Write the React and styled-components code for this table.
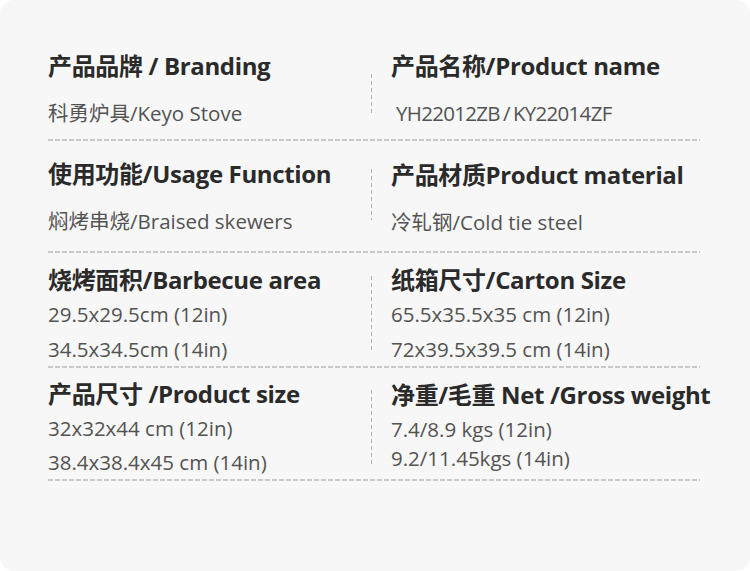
import React from "react"
import styled, { createGlobalStyle } from "styled-components"

const GlobalStyle = createGlobalStyle`
  html, body {
    margin: 0;
    padding: 0;
    background: #ffffff;
  }
  body {
    font-family: "Open Sans", "Noto Sans CJK SC", sans-serif;
  }
`

const rows = [
  {
    pad: [16, 11],
    divider: [25, 16],
    left: {
      title: "产品品牌 / Branding",
      values: ["科勇炉具/Keyo Stove"],
      gap: 13,
      lh: 34,
    },
    right: {
      title: "产品名称/Product name",
      values: ["YH22012ZB / KY22014ZF"],
      gap: 13,
      lh: 34,
      indent: 5,
      tight: true,
    },
  },
  {
    pad: [16, 14],
    divider: [12, 19],
    left: {
      title: "使用功能/Usage Function",
      values: ["焖烤串烧/Braised skewers"],
      gap: 13,
      lh: 34,
    },
    right: {
      title: "产品材质Product material",
      values: ["冷轧钢/Cold tie steel"],
      gap: 13,
      lh: 34,
      top: 1,
    },
  },
  {
    pad: [10, 1],
    divider: [13, 14],
    left: {
      title: "烧烤面积/Barbecue area",
      values: ["29.5x29.5cm (12in)", "34.5x34.5cm (14in)"],
      gap: 0,
      lh: 35,
    },
    right: {
      title: "纸箱尺寸/Carton Size",
      values: ["65.5x35.5x35 cm (12in)", "72x39.5x39.5 cm (14in)"],
      gap: 0,
      lh: 35,
    },
  },
  {
    pad: [9, 2],
    divider: [13, 12],
    left: {
      title: "产品尺寸 /Product size",
      values: ["32x32x44 cm (12in)", "38.4x38.4x45 cm (14in)"],
      gap: 0,
      lh: 34,
    },
    right: {
      title: "净重/毛重 Net /Gross weight",
      values: ["7.4/8.9 kgs (12in)", "9.2/11.45kgs (14in)"],
      gap: 3,
      lh: 29,
      top: 1,
    },
  },
]

const Cell = ({ data }) => (
  <CellBox $top={data.top || 0}>
    <Title>{data.title}</Title>
    <Values $gap={data.gap}>
      {data.values.map((v) => (
        <Value
          key={v}
          $lh={data.lh}
          $indent={data.indent || 0}
          $tight={data.tight}
        >
          {v}
        </Value>
      ))}
    </Values>
  </CellBox>
)

const App = () => {
  return (
    <>
      <GlobalStyle />
      <Card>
        <Table>
          {rows.map((row, i) => (
            <Row key={i} $pt={row.pad[0]} $pb={row.pad[1]}>
              <LeftCol>
                <Cell data={row.left} />
              </LeftCol>
              <Divider $mt={row.divider[0]} $mb={row.divider[1]} />
              <RightCol>
                <Cell data={row.right} />
              </RightCol>
            </Row>
          ))}
        </Table>
      </Card>
    </>
  )
}

export default App

const Card = styled.div`
  height: 571px;
  box-sizing: border-box;
  background: #f7f7f7;
  border-radius: 14px;
  padding: 33px 50px 0 48px;
  overflow: hidden;
`

const Table = styled.div`
  display: flex;
  flex-direction: column;
`

const Row = styled.div`
  display: flex;
  align-items: stretch;
  background: repeating-linear-gradient(
      to right,
      #c9c9c9 0 5px,
      transparent 5px 7px
    )
    left bottom / 100% 2px no-repeat;
  padding-top: ${(p) => p.$pt}px;
  padding-bottom: ${(p) => p.$pb}px;
`

const LeftCol = styled.div`
  flex: 0 0 323px;
  display: flex;
`

const RightCol = styled.div`
  flex: 1;
  display: flex;
  padding-left: 19px;
`

const Divider = styled.div`
  flex: 0 0 1px;
  margin-top: ${(p) => p.$mt}px;
  margin-bottom: ${(p) => p.$mb}px;
  background: repeating-linear-gradient(
    to bottom,
    #b3b3b3 0 4px,
    transparent 4px 7px
  );
`

const CellBox = styled.div`
  display: flex;
  flex-direction: column;
  padding-top: ${(p) => p.$top}px;
`

const Title = styled.div`
  font-family: "Open Sans", "Noto Sans CJK SC", sans-serif;
  font-size: 24px;
  font-weight: 700;
  line-height: 34px;
  letter-spacing: -0.35px;
  color: #2a2a2a;
  white-space: nowrap;
`

const Values = styled.div`
  display: flex;
  flex-direction: column;
  margin-top: ${(p) => p.$gap}px;
`

const Value = styled.div`
  font-family: "Open Sans", "Noto Sans CJK SC", sans-serif;
  font-size: 20.5px;
  line-height: ${(p) => p.$lh}px;
  color: #535353;
  white-space: nowrap;
  padding-left: ${(p) => p.$indent}px;
  letter-spacing: ${(p) => (p.$tight ? "-0.7px" : "0")};
  word-spacing: ${(p) => (p.$tight ? "-1.5px" : "0")};
`
